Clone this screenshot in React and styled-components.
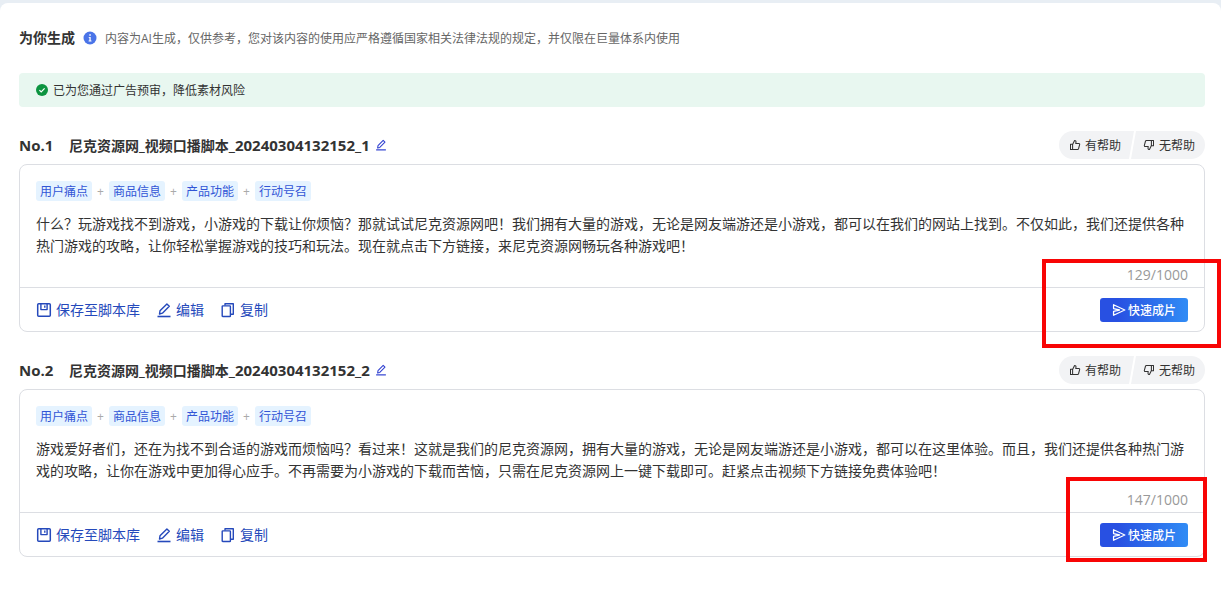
import React from "react";
import styled, { createGlobalStyle } from "styled-components";

const GlobalStyle = createGlobalStyle`
  *, *::before, *::after { box-sizing: border-box; }
  body {
    margin: 0;
    background: #fff;
    color: #333;
    font-family: "Open Sans", "Noto Sans CJK SC", sans-serif;
    font-size: 14px;
    line-height: 22px;
  }
  h1, h2, p { margin: 0; }
  button {
    font: inherit;
    color: inherit;
    border: 0;
    padding: 0;
    background: none;
    cursor: pointer;
  }
`;

const Page = styled.div`
  background: #e8eef4;
  padding-top: 3px;
`;

const Panel = styled.main`
  display: flex;
  flex-direction: column;
  gap: 24px;
  min-height: calc(100vh - 3px);
  padding: 24px 16px 24px 19px;
  border-radius: 8px 8px 0 0;
  background: #fff;
`;

const Header = styled.header`
  display: flex;
  align-items: center;
  gap: 8px;
`;

const Heading = styled.h1`
  font-size: 14px;
  font-weight: 700;
`;

const SmallText = styled.p`
  padding-top: 2px;
  font-size: 12px;
  line-height: 20px;
  color: ${(p) => (p.$muted ? "#666" : "inherit")};
`;

const Notice = styled.div`
  display: flex;
  align-items: center;
  gap: 5px;
  height: 34px;
  padding: 0 17px;
  border-radius: 4px;
  background: #e8f7f0;
`;

const Script = styled.section`
  display: flex;
  flex-direction: column;
  gap: 5px;
`;

const ScriptHeader = styled.div`
  display: flex;
  align-items: center;
  justify-content: space-between;
  height: 28px;
`;

const TitleBar = styled.div`
  display: flex;
  align-items: center;
  gap: 5px;
`;

const Title = styled.h2`
  display: flex;
  align-items: baseline;
  font-size: 14px;
  font-weight: 700;
`;

const Index = styled.span`
  width: 50px;
  font-size: 15px;
`;

const Serial = styled.span`
  font-size: 15px;
`;

const RenameButton = styled.button`
  display: flex;
  color: #3040d0;
`;

const Feedback = styled.div`
  display: flex;
  height: 28px;
  border-radius: 14px;
  overflow: hidden;
`;

const FeedbackButton = styled.button`
  display: flex;
  align-items: center;
  gap: 4px;
  width: 75px;
  padding: ${(p) => (p.$last ? "0 0 0 13px" : "0 0 0 10px")};
  margin-left: ${(p) => (p.$last ? "-4px" : "0")};
  background: #f2f3f5;
  clip-path: ${(p) =>
    p.$last
      ? "polygon(6px 0, 100% 0, 100% 100%, 1px 100%)"
      : "polygon(0 0, 100% 0, calc(100% - 5px) 100%, 0 100%)"};
`;

const Card = styled.article`
  position: relative;
  border: 1px solid #dcdee3;
  border-radius: 8px;
`;

const CardBody = styled.div`
  padding: 16px 16px 1px;
`;

const Tags = styled.div`
  display: flex;
  margin-bottom: 12px;
  font-size: 12px;
  line-height: 18px;
`;

const Tag = styled.span`
  padding: 2px 4px 0;
  border-radius: 3px;
  background: #e5f3ff;
  color: #3155d6;
`;

const Plus = styled.span`
  width: 17px;
  padding-top: 2px;
  text-align: center;
  color: #aaa;
`;

const Count = styled.p`
  margin-top: 7px;
  text-align: right;
  color: #999;
`;

const CardFooter = styled.footer`
  display: flex;
  align-items: center;
  justify-content: space-between;
  height: 44px;
  padding: 0 16px;
  border-top: 1px solid #dcdee3;
`;

const Actions = styled.div`
  display: flex;
  gap: 16px;
`;

const Action = styled.button`
  display: flex;
  align-items: center;
  gap: 4px;
  color: #2549bb;
`;

const PrimaryButton = styled.button`
  display: flex;
  align-items: center;
  justify-content: center;
  gap: 2px;
  width: 88px;
  height: 24px;
  border-radius: 3px;
  background: linear-gradient(90deg, #2850e2 20%, #318cf5);
  color: #fff;
  font-weight: 500;
`;

const Highlight = styled.div`
  position: absolute;
  top: ${(p) => p.$top}px;
  right: ${(p) => p.$right}px;
  width: ${(p) => p.$width}px;
  height: ${(p) => p.$height}px;
  border: 4px solid #f80505;
  pointer-events: none;
`;

const Svg = ({ size = 16, children }) => (
  <svg
    width={size}
    height={size}
    viewBox="0 0 16 16"
    fill="none"
    stroke="currentColor"
    strokeWidth="1.4"
    strokeLinejoin="round"
    aria-hidden="true"
  >
    {children}
  </svg>
);

const InfoIcon = () => (
  <svg width="14" height="14" viewBox="0 0 14 14" aria-hidden="true">
    <circle cx="7" cy="7" r="6.5" fill="#4a74e8" />
    <path d="M6.3 3.2h1.5v1.5H6.3zM5.7 5.9h2v3.6h.8v1H5.6v-1h.8V6.8h-.7z" fill="#fff" />
  </svg>
);

const CheckIcon = () => (
  <svg width="12" height="12" viewBox="0 0 12 12" aria-hidden="true">
    <circle cx="6" cy="6" r="6" fill="#0c9440" />
    <path d="M3.4 6.1l1.8 1.8 3.4-3.5" fill="none" stroke="#fff" strokeWidth="1.2" />
  </svg>
);

const EditIcon = ({ size }) => (
  <Svg size={size}>
    <path d="M3.5 12l.5-3.2 6.9-6.9 2.4 2.4-6.9 6.9z" />
    <path d="M1.5 14.5h13" strokeWidth="1.6" />
  </Svg>
);

const SaveIcon = () => (
  <Svg>
    <rect x="1.7" y="1.7" width="12.6" height="12.6" rx="1" strokeWidth="1.5" />
    <path d="M4.9 2v5.6h6.2V2M8.8 3.6v2.2" />
  </Svg>
);

const CopyIcon = () => (
  <Svg>
    <path d="M5 3.5V1.7h8.3v10.6h-2.4" />
    <rect x="2.2" y="3.9" width="8.2" height="10.6" rx="0.6" />
  </Svg>
);

const thumb = (
  <path d="M2 7h2.8v7H2zM4.8 7.2L7.4 2c1.4 0 2.1.8 1.9 2.1L9 6.1h4.2c.8 0 1.2.6 1 1.3l-1.5 5.6c-.2.6-.6 1-1.2 1H4.8" />
);

const ThumbUpIcon = () => <Svg size={12}>{thumb}</Svg>;

const ThumbDownIcon = () => (
  <Svg size={12}>
    <g transform="rotate(180 8 8)">{thumb}</g>
  </Svg>
);

const SendIcon = () => (
  <Svg size={14}>
    <path d="M1.8 2L14.6 8 1.8 14V9.6L8.6 8 1.8 6.4z" strokeWidth="1.5" />
  </Svg>
);

const TAGS = ["用户痛点", "商品信息", "产品功能", "行动号召"];

const SCRIPTS = [
  {
    id: 1,
    count: 129,
    text: "什么？玩游戏找不到游戏，小游戏的下载让你烦恼？那就试试尼克资源网吧！我们拥有大量的游戏，无论是网友端游还是小游戏，都可以在我们的网站上找到。不仅如此，我们还提供各种热门游戏的攻略，让你轻松掌握游戏的技巧和玩法。现在就点击下方链接，来尼克资源网畅玩各种游戏吧！",
    mark: { $top: 94, $right: -17, $width: 179, $height: 89 },
  },
  {
    id: 2,
    count: 147,
    text: "游戏爱好者们，还在为找不到合适的游戏而烦恼吗？看过来！这就是我们的尼克资源网，拥有大量的游戏，无论是网友端游还是小游戏，都可以在这里体验。而且，我们还提供各种热门游戏的攻略，让你在游戏中更加得心应手。不再需要为小游戏的下载而苦恼，只需在尼克资源网上一键下载即可。赶紧点击视频下方链接免费体验吧！",
    mark: { $top: 87, $right: -3, $width: 141, $height: 85 },
  },
];

function ScriptItem({ id, count, text, mark }) {
  return (
    <Script>
      <ScriptHeader>
        <TitleBar>
          <Title>
            <Index>No.{id}</Index>
            <span>尼克资源网_视频口播脚本</span>
            <Serial>_20240304132152_{id}</Serial>
          </Title>
          <RenameButton type="button" aria-label="重命名">
            <EditIcon size={12} />
          </RenameButton>
        </TitleBar>
        <Feedback>
          <FeedbackButton type="button">
            <ThumbUpIcon />
            <SmallText as="span">有帮助</SmallText>
          </FeedbackButton>
          <FeedbackButton type="button" $last>
            <ThumbDownIcon />
            <SmallText as="span">无帮助</SmallText>
          </FeedbackButton>
        </Feedback>
      </ScriptHeader>
      <Card>
        <CardBody>
          <Tags>
            {TAGS.map((tag, i) => (
              <React.Fragment key={tag}>
                {i > 0 && <Plus>+</Plus>}
                <Tag>{tag}</Tag>
              </React.Fragment>
            ))}
          </Tags>
          <p>{text}</p>
          <Count>{count}/1000</Count>
        </CardBody>
        <CardFooter>
          <Actions>
            <Action type="button">
              <SaveIcon />
              保存至脚本库
            </Action>
            <Action type="button">
              <EditIcon />
              编辑
            </Action>
            <Action type="button">
              <CopyIcon />
              复制
            </Action>
          </Actions>
          <PrimaryButton type="button">
            <SendIcon />
            <SmallText as="span">快速成片</SmallText>
          </PrimaryButton>
        </CardFooter>
        <Highlight {...mark} />
      </Card>
    </Script>
  );
}

export default function App() {
  return (
    <Page>
      <GlobalStyle />
      <Panel>
        <Header>
          <Heading>为你生成</Heading>
          <InfoIcon />
          <SmallText $muted>
            内容为AI生成，仅供参考，您对该内容的使用应严格遵循国家相关法律法规的规定，并仅限在巨量体系内使用
          </SmallText>
        </Header>
        <Notice>
          <CheckIcon />
          <SmallText>已为您通过广告预审，降低素材风险</SmallText>
        </Notice>
        {SCRIPTS.map((s) => (
          <ScriptItem key={s.id} {...s} />
        ))}
      </Panel>
    </Page>
  );
}
